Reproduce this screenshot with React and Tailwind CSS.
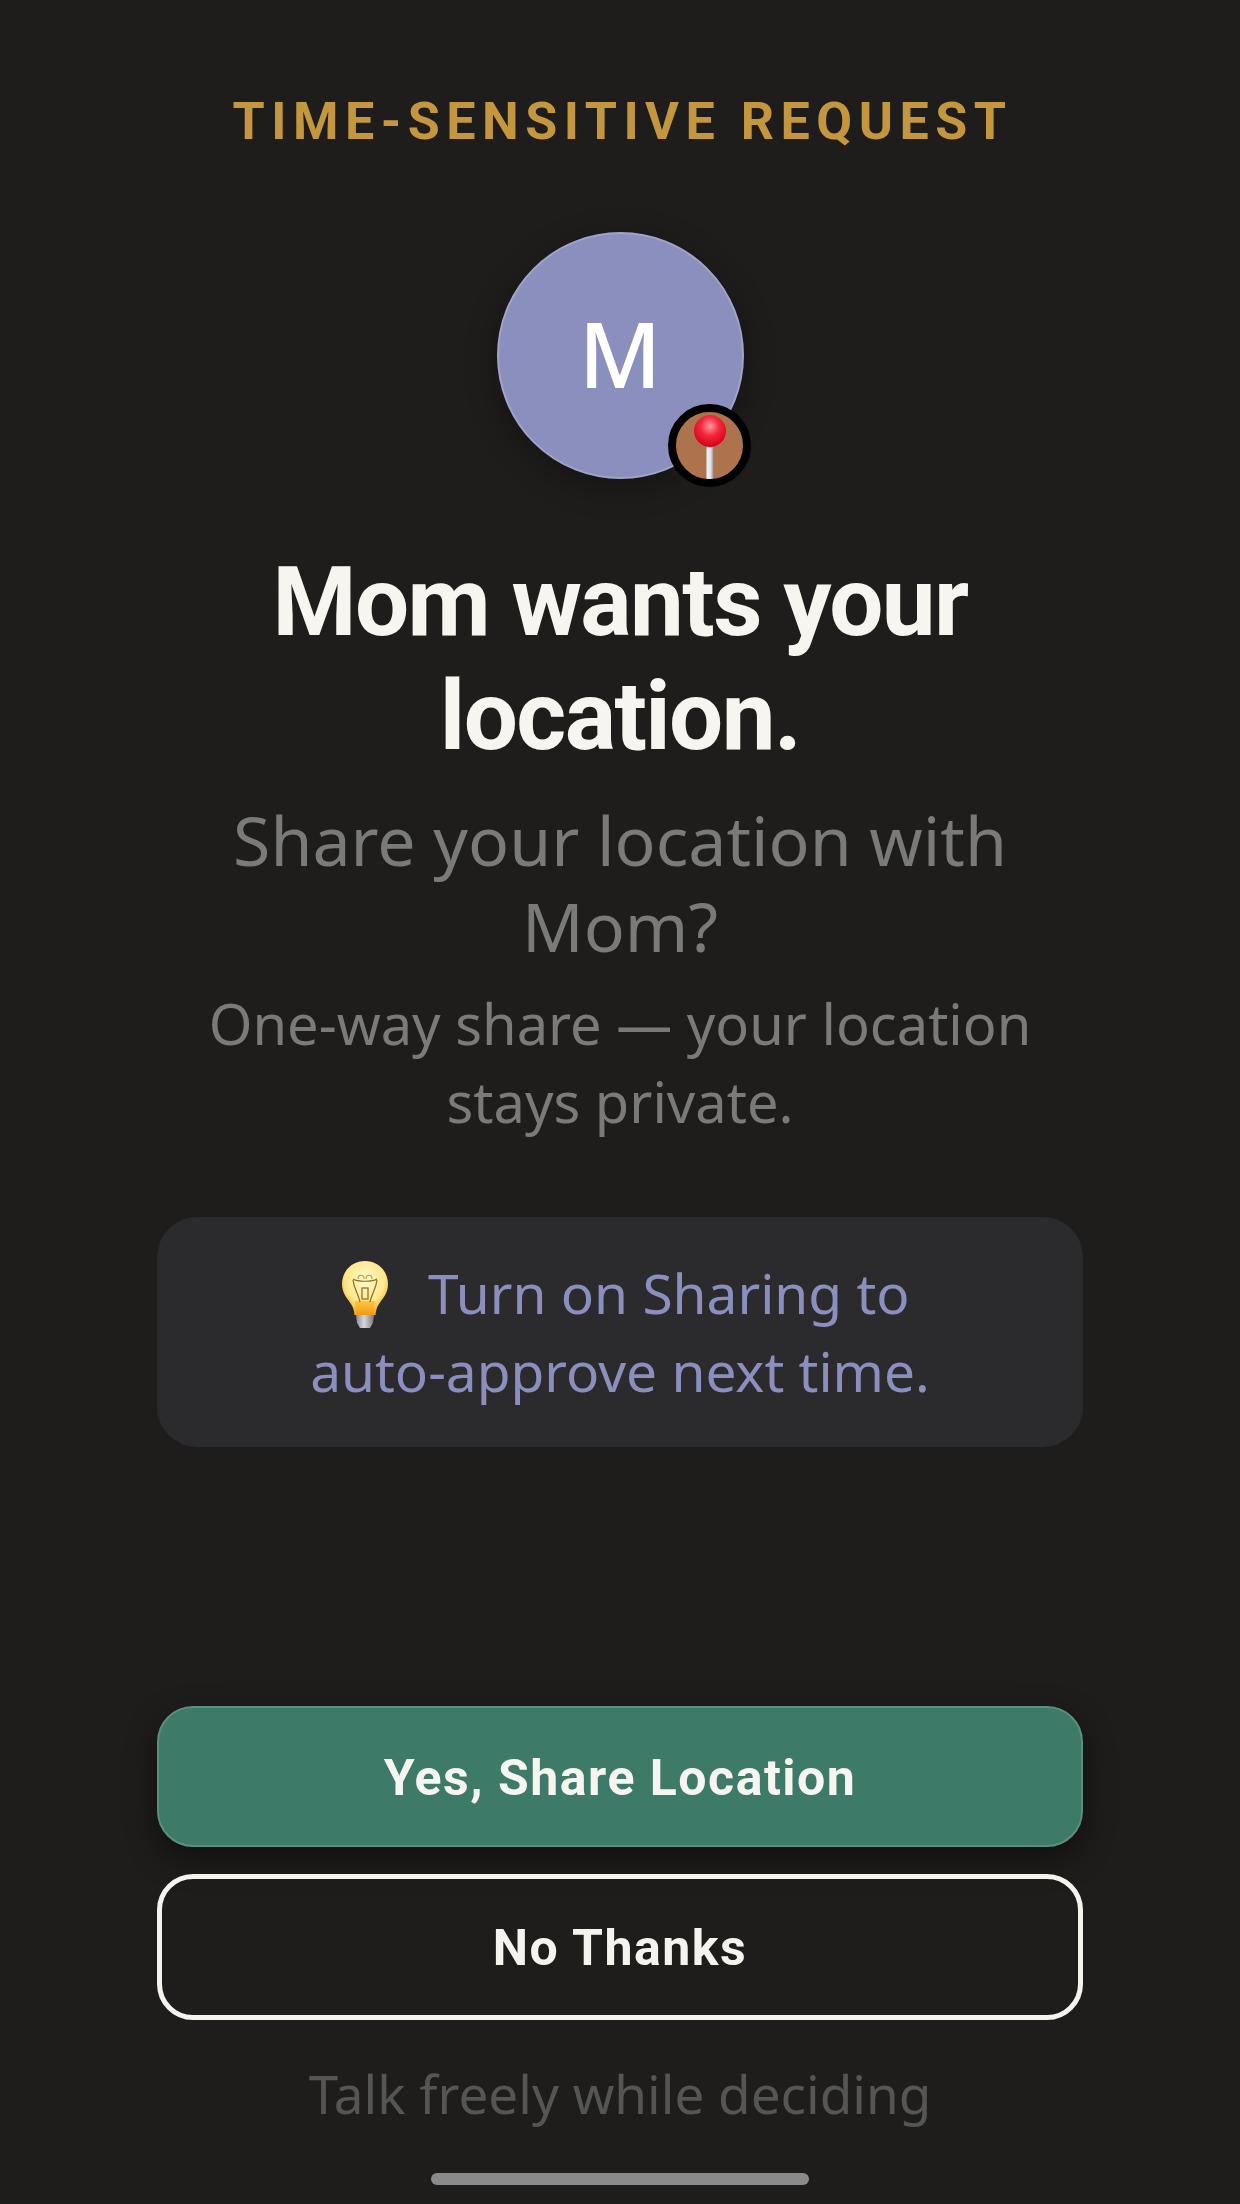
function PinIcon() {
  return (
    <svg viewBox="0 0 67 67" className="w-[67px] h-[67px]">
      <defs>
        <radialGradient id="pinHead" cx="0.5" cy="0.35" r="0.65">
          <stop offset="0" stopColor="#ff9aa0" />
          <stop offset="0.45" stopColor="#f5283c" />
          <stop offset="1" stopColor="#d0001c" />
        </radialGradient>
        <linearGradient id="pinNeedle" x1="0" x2="1" y1="0" y2="0">
          <stop offset="0" stopColor="#f4f4f8" />
          <stop offset="0.6" stopColor="#e0e0ea" />
          <stop offset="1" stopColor="#8d8d9c" />
        </linearGradient>
      </defs>
      <rect x="30.5" y="30" width="7" height="37" fill="url(#pinNeedle)" />
      <circle cx="34" cy="19" r="16" fill="url(#pinHead)" />
    </svg>
  );
}

function BulbIcon() {
  return (
    <svg viewBox="0 0 46 67" className="inline-block w-[46px] h-[67px] ml-[12px] mr-[11px] align-[-14px]">
      <defs>
        <radialGradient id="bulbGlass" cx="0.5" cy="0.36" r="0.64">
          <stop offset="0" stopColor="#fffbd0" />
          <stop offset="0.65" stopColor="#ffe88a" />
          <stop offset="1" stopColor="#f9a81c" />
        </radialGradient>
        <linearGradient id="bulbNeck" x1="0" x2="0" y1="0" y2="1">
          <stop offset="0" stopColor="#ffc740" />
          <stop offset="1" stopColor="#f09a10" />
        </linearGradient>
        <linearGradient id="bulbBase" x1="0" x2="1" y1="0" y2="0">
          <stop offset="0" stopColor="#8a8a90" />
          <stop offset="0.45" stopColor="#d8d8dc" />
          <stop offset="1" stopColor="#77777d" />
        </linearGradient>
      </defs>
      <path d="M23 0C10 0 0 10 0 23c0 9 5 14 9 20 2 3 3 6 3.500 11h21c.5-5 1.500-8 3.500-11 4-6 9-11 9-20C46 10 36 0 23 0z" fill="url(#bulbGlass)" />
      <path d="M13 40h20l-1 14H14z" fill="url(#bulbNeck)" />
      <path d="M14 54h18l-1 8-3 5h-10l-3-5z" fill="url(#bulbBase)" />
      <path d="M11 18c4 3 20 3 24 0M11 19c1 9 5 13 7 22M35 19c-1 9-5 13-7 22" fill="none" stroke="#8d6a20" strokeWidth="1.200" />
      <path d="M16 18c0-5 6-5 6 0M24 18c0-5 6-5 6 0" fill="none" stroke="#c9962e" strokeWidth="1.200" />
      <rect x="20" y="27" width="6" height="11" fill="none" stroke="#a07a28" strokeWidth="1.400" />
    </svg>
  );
}

export default function App() {
  return (
    <div className="w-[1240px] h-[2204px] bg-[#1e1d1b] flex flex-col items-center font-['Roboto',sans-serif] overflow-hidden">
      <div className="mt-[92px] ml-[5px] text-[52px] leading-[60px] font-bold tracking-[6.5px] text-[#c4973f]">TIME-SENSITIVE REQUEST</div>
      <div className="relative mt-[80px] w-[247px] h-[247px] rounded-full bg-[#8b8fbd] border-2 border-[#a0a4c8] flex items-center justify-center shadow-[0_8px_32px_rgba(0,0,0,0.3)]">
        <span className="text-white text-[90px] leading-none pb-[6px] font-['Noto_Sans',sans-serif] font-medium">M</span>
        <div className="absolute right-[-9px] bottom-[-10px] w-[83px] h-[83px] rounded-full bg-[#ad734c] border-[8px] border-black flex items-start justify-center overflow-hidden">
          <PinIcon />
        </div>
      </div>
      <h1 className="mt-[66px] text-[96px] leading-[114px] font-bold text-[#f7f5ef] text-center tracking-[-1.6px] w-[800px]">Mom wants your location.</h1>
      <p className="mt-[24px] w-[800px] text-center text-[68px] leading-[86px] text-[#7a7a78] font-['Noto_Sans',sans-serif]">Share your location with Mom?</p>
      <p className="mt-[15px] w-[860px] text-center text-[56px] leading-[78px] text-[#7a7a78] font-['Noto_Sans',sans-serif]">One-way share — your location stays private.</p>
      <div className="mt-[77px] w-[926px] h-[230px] rounded-[40px] bg-[#2b2b2e] flex items-center justify-center text-center text-[55px] leading-[78px] text-[#8b8fbd] font-['Noto_Sans',sans-serif]">
        <p><BulbIcon /> &nbsp;Turn on Sharing to<br />auto-approve next time.</p>
      </div>
      <button className="mt-[259px] pt-[3px] w-[926px] h-[141px] rounded-[36px] bg-[#3d7a68] border-2 border-[#5a8f7f] text-[#f7f5ef] text-[50px] font-bold tracking-[1.500px] shadow-[0_12px_32px_rgba(0,0,0,0.45)]">Yes, Share Location</button>
      <button className="mt-[27px] pt-[2px] w-[926px] h-[146px] rounded-[36px] border-[5px] border-[#f5f3ee] text-[#f5f3ee] text-[50px] font-bold tracking-[1.500px]">No Thanks</button>
      <p className="mt-[42px] text-[53px] leading-[64px] text-[#555553] font-['Noto_Sans',sans-serif]">Talk freely while deciding</p>
      <div className="mt-[47px] w-[378px] h-[12px] rounded-full bg-[#8a8a8a]"></div>
    </div>
  );
}
